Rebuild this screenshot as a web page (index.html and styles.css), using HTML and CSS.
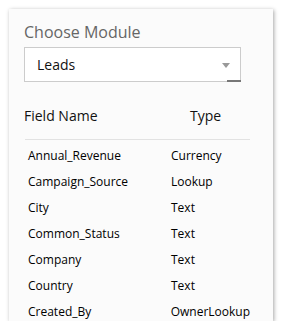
FILE: index.html
```html
<!DOCTYPE html>
<html lang="en">
<head>
    <meta charset="UTF-8">
    <meta name="viewport" content="width=device-width, initial-scale=1.0">
    <title>Choose Module</title>
    <link rel="stylesheet" href="styles.css">
</head>
<body>
    <div class="panel">
        <div class="title">Choose Module</div>

        <div class="select">
            <span class="select-value">Leads</span>
            <span class="select-arrow"></span>
        </div>

        <div class="fields">
            <div class="fields-head">
                <span class="col-name">Field Name</span>
                <span class="col-type">Type</span>
            </div>
            <div class="row"><span class="col-name">Annual_Revenue</span><span class="col-type">Currency</span></div>
            <div class="row"><span class="col-name">Campaign_Source</span><span class="col-type">Lookup</span></div>
            <div class="row"><span class="col-name">City</span><span class="col-type">Text</span></div>
            <div class="row"><span class="col-name">Common_Status</span><span class="col-type">Text</span></div>
            <div class="row"><span class="col-name">Company</span><span class="col-type">Text</span></div>
            <div class="row"><span class="col-name">Country</span><span class="col-type">Text</span></div>
            <div class="row"><span class="col-name">Created_By</span><span class="col-type">OwnerLookup</span></div>
        </div>
    </div>
</body>
</html>
```

FILE: styles.css
```css
body {
    margin: 0;
    background-color: #fff;
    font-family: "Open Sans", Arial, sans-serif;
    color: #111;
}
.panel {
    margin: 9px 0 0 9px;
    width: 264px;
    height: 312px;
    box-sizing: border-box;
    padding: 12px 0 0 15px;
    background-color: #fbfbfb;
    box-shadow: 1px 1px 4px rgba(0,0,0,0.35);
    overflow: hidden;
}
.title {
    font-size: 16px;
    line-height: 22px;
    color: #666;
}
.select {
    position: relative;
    display: flex;
    align-items: center;
    justify-content: space-between;
    margin-top: 4px;
    width: 217px;
    height: 35px;
    box-sizing: border-box;
    padding: 0 10px 0 12px;
    background-color: #fff;
    border: 1px solid #ccc;
}
.select::after {
    content: "";
    position: absolute;
    right: -1px;
    bottom: -1px;
    width: 14px;
    height: 2px;
    background-color: #777;
}
.select-value {
    font-size: 14px;
    line-height: 19px;
    color: #111;
}
.select-arrow {
    width: 0;
    height: 0;
    margin-top: 1px;
    border-left: 4px solid transparent;
    border-right: 4px solid transparent;
    border-top: 5px solid #999;
}
.fields {
    margin: 24px 0 0 1px;
    width: 225px;
}
.fields-head {
    display: flex;
    font-size: 14px;
    line-height: 20px;
    padding-bottom: 13px;
    border-bottom: 1px solid #e2e2e2;
    margin-bottom: 3px;
}
.fields-head .col-name {
    width: 166px;
    margin-left: -1px;
}
.row {
    display: flex;
    font-size: 12px;
    line-height: 26px;
    padding-left: 3px;
    color: #000;
}
.row .col-name {
    width: 143px;
}
```
